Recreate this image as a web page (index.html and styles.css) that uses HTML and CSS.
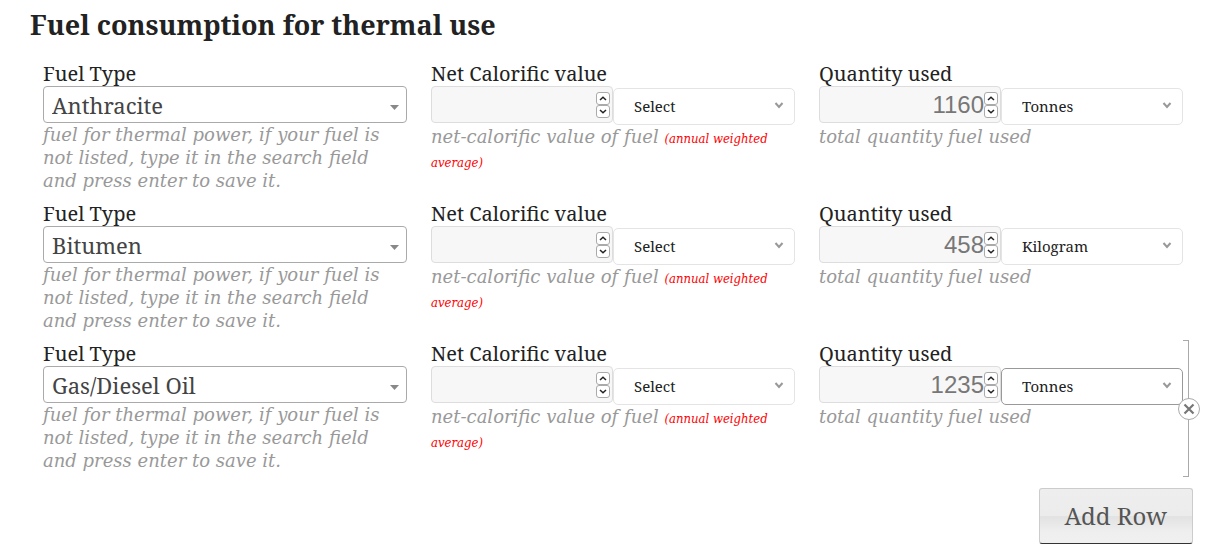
FILE: index.html
```html
<!DOCTYPE html>
<html lang="en">
<head>
<meta charset="utf-8">
<title>Fuel consumption for thermal use</title>
<link rel="stylesheet" href="styles.css">
</head>
<body>
<main class="page">
  <h1 class="title">Fuel consumption for thermal use</h1>
  <form class="rows" id="rows">
  </form>
  <div class="actions"><button class="add" type="button">Add Row</button></div>
</main>
<script src="rows.js"></script>
</body>
</html>
```

FILE: styles.css
```css
* { box-sizing: border-box; }
body {
  margin: 0;
  background: #fff;
  color: #222;
  font-family: "Noto Serif", "Droid Serif", "DejaVu Serif", serif;
}
.page { padding: 7px 25px 10px 30px; }
.title { margin: 0 0 19px; font-size: 27px; line-height: 36px; font-weight: bold; }
.rows { margin: 0 10px 0 13px; }
.row {
  position: relative;
  display: grid;
  grid-template-columns: repeat(3, minmax(0, 1fr));
  column-gap: 24px;
  padding-bottom: 10px;
}
.label { display: block; font-size: 20px; line-height: 24px; }
.control { display: flex; align-items: flex-start; }
.hint {
  margin: 0;
  color: #999;
  font-family: "DejaVu Serif", serif;
  font-size: 18px;
  line-height: 23px;
  font-style: italic;
}
.note { color: #f00; font-family: "DejaVu Serif Condensed", "Noto Serif", serif; font-size: 13px; line-height: 20px; }
.picker { position: relative; flex: 1; min-width: 0; }
.picker select {
  display: block;
  width: 100%;
  height: 37px;
  padding: 0 30px 2px 20px;
  appearance: none;
  background: #fff;
  border: 1px solid #e4e4e4;
  border-radius: 5px;
  color: #222;
  font-family: inherit;
  font-size: 15px;
}
.picker svg { position: absolute; right: 11px; top: 14px; pointer-events: none; }
.picker.fuel select { padding: 0 30px 0 8px; border-color: #aaa; border-radius: 4px; color: #444; font-size: 22px; }
.picker.fuel svg { right: 8px; top: 19px; }
.picker.unit { margin-top: 2px; }
.picker.active select { border-color: #999; }
.number { position: relative; flex: 1; min-width: 0; }
.number input {
  display: block;
  width: 100%;
  height: 37px;
  padding: 0 16px 0 4px;
  border: 1px solid #ddd;
  border-radius: 4px;
  background: #f7f7f7;
  color: #777;
  font-family: "Liberation Sans", Arial, sans-serif;
  font-size: 24px;
  text-align: right;
  appearance: textfield;
}
.number input::-webkit-inner-spin-button { appearance: none; margin: 0; }
.spin { position: absolute; right: 3px; top: 6px; display: flex; flex-direction: column; }
.spin button {
  display: block;
  width: 14px;
  height: 13px;
  padding: 0;
  border: 1px solid #aaa;
  border-radius: 3px;
  background: #fff;
}
.spin svg { display: block; margin: auto; }
.bracket {
  position: absolute;
  top: -2px;
  bottom: 5px;
  right: -6px;
  width: 6px;
  border: 1px solid #aaa;
  border-left: 0;
}
.remove {
  position: absolute;
  top: 56px;
  right: -17px;
  width: 22px;
  height: 22px;
  padding: 0;
  border: 1px solid #aaa;
  border-radius: 50%;
  background: #fff;
}
.remove svg { display: block; margin: auto; }
.actions { display: flex; justify-content: flex-end; margin-top: 6px; }
.add {
  height: 56px;
  padding: 0 25px 2px;
  border: 1px solid #ccc;
  border-bottom-color: #333;
  border-radius: 3px;
  background: linear-gradient(#eee 0, #ececec 50%, #e2e2e2 51%, #efefef 80%, #f0f0f0 100%);
  color: #555;
  font-family: inherit;
  font-size: 24px;
}
```

FILE: rows.js
```js
const rows = [
  { fuel: 'Anthracite', quantity: 1160, unit: 'Tonnes' },
  { fuel: 'Bitumen', quantity: 458, unit: 'Kilogram' },
  { fuel: 'Gas/Diesel Oil', quantity: 1235, unit: 'Tonnes', active: true }
];

const chevron = '<svg width="10" height="7" viewBox="0 0 10 7"><path d="M1.5 1L5 5L8.500 1" fill="none" stroke="#999" stroke-width="2"/></svg>';
const triangle = '<svg width="9" height="5" viewBox="0 0 9 5"><path d="M0 0h9L4.500 5z" fill="#888"/></svg>';
const arrow = d => `<svg width="8" height="5" viewBox="0 0 8 5"><path d="${d}" fill="none" stroke="#222" stroke-width="1.500"/></svg>`;
const cross = '<svg width="12" height="12" viewBox="0 0 12 12"><path d="M1.500 1.500l9 9M10.500 1.500l-9 9" stroke="#777" stroke-width="2.200"/></svg>';

const number = (id, value) => `
  <div class="number">
    <input type="number" id="${id}" value="${value}">
    <div class="spin">
      <button type="button" aria-label="Increase">${arrow('M1 4L4 1.200L7 4')}</button>
      <button type="button" aria-label="Decrease">${arrow('M1 1L4 3.800L7 1')}</button>
    </div>
  </div>`;

const unit = (value, active) => `
  <div class="picker unit${active ? ' active' : ''}">
    <select aria-label="Unit"><option>${value}</option></select>${chevron}
  </div>`;

document.getElementById('rows').innerHTML = rows.map((r, i) => `
  <div class="row">
    <div class="field">
      <label class="label" for="fuel${i}">Fuel Type</label>
      <div class="control"><div class="picker fuel">
        <select id="fuel${i}"><option>${r.fuel}</option></select>${triangle}
      </div></div>
      <p class="hint">fuel for thermal power, if your fuel is not listed, type it in the search field and press enter to save it.</p>
    </div>
    <div class="field">
      <label class="label" for="ncv${i}">Net Calorific value</label>
      <div class="control">${number('ncv' + i, '')}${unit('Select')}</div>
      <p class="hint">net-calorific value of fuel <span class="note">(annual weighted average)</span></p>
    </div>
    <div class="field">
      <label class="label" for="qty${i}">Quantity used</label>
      <div class="control">${number('qty' + i, r.quantity)}${unit(r.unit, r.active)}</div>
      <p class="hint">total quantity fuel used</p>
    </div>
    ${r.active ? `<div class="bracket"></div><button class="remove" type="button" aria-label="Remove row">${cross}</button>` : ''}
  </div>`).join('');
```
